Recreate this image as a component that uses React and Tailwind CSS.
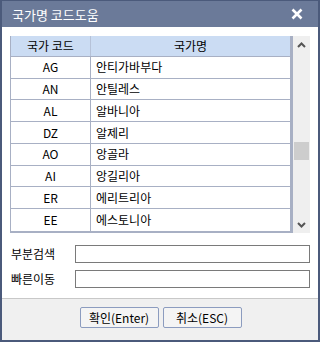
import React from "react";

const rows = [
  ["AG", "안티가바부다"],
  ["AN", "안틸레스"],
  ["AL", "알바니아"],
  ["DZ", "알제리"],
  ["AO", "앙골라"],
  ["AI", "앙길리아"],
  ["ER", "에리트리아"],
  ["EE", "에스토니아"],
];

const font = { fontFamily: '"Noto Sans CJK KR", "Liberation Sans", sans-serif' };

export default function App() {
  return (
    <div
      className="w-[320px] h-[342px] bg-[#4b5a7b] pt-[1px] px-[2px] pb-[2px] flex flex-col text-[12px] text-black"
      style={font}
    >
      {/* title bar */}
      <div className="h-[26px] bg-[#6b7a99] flex items-center justify-between pl-[10px] pr-[15px]">
        <span className="text-white text-[13px] leading-none">국가명 코드도움</span>
        <svg width="12" height="12" viewBox="0 0 12 12">
          <path d="M1.5 1.5L10.5 10.5M10.5 1.5L1.5 10.5" stroke="#fff" strokeWidth="2.6" />
        </svg>
      </div>

      {/* body */}
      <div className="flex-1 bg-white flex flex-col pt-[9px] pl-[8px] pr-[7px]">
        <div className="flex h-[197px]">
          {/* list */}
          <div className="w-[283px] flex flex-col border-l border-[#a8b0c4] border-r-[3px] border-r-[#a8b0c4] border-b-2 border-b-[#a8b0c4]">
            <div className="h-[21px] flex bg-[#cbdcf3] border-b border-[#a8b0c4]">
              <div className="w-[80px] border-r border-[#b6c2d8] flex items-center justify-center">국가 코드</div>
              <div className="flex-1 flex items-center justify-center">국가명</div>
            </div>
            {rows.map(([code, name], i) => (
              <div
                key={code}
                className={`h-[22px] flex ${i < rows.length - 1 ? "border-b border-[#a8b0c4]" : ""}`}
              >
                <div className="w-[80px] border-r border-[#a8b0c4] flex items-center justify-center">{code}</div>
                <div className="flex-1 flex items-center pl-[5px]">{name}</div>
              </div>
            ))}
          </div>
          {/* scrollbar */}
          <div className="w-[17px] bg-[#efefef] flex flex-col items-center">
            <div className="h-[17px] flex items-center justify-center">
              <svg width="9" height="6" viewBox="0 0 9 6">
                <path d="M1 5L4.5 1.5L8 5" stroke="#555" strokeWidth="2" fill="none" />
              </svg>
            </div>
            <div className="flex-1 w-full flex flex-col px-[1px]">
              <div className="h-[89px]" />
              <div className="h-[18px] bg-[#cdcdcd]" />
            </div>
            <div className="h-[17px] flex items-center justify-center">
              <svg width="9" height="6" viewBox="0 0 9 6">
                <path d="M1 1L4.5 4.5L8 1" stroke="#555" strokeWidth="2" fill="none" />
              </svg>
            </div>
          </div>
        </div>

        {/* search fields */}
        <div className="mt-[12px] flex flex-col gap-[7px]">
          <div className="flex items-center">
            <span className="w-[65px] pl-[1px]">부분검색</span>
            <div className="w-[235px] h-[18px] border border-[#7a7a7a] bg-white" />
          </div>
          <div className="flex items-center">
            <span className="w-[65px] pl-[1px]">빠른이동</span>
            <div className="w-[235px] h-[18px] border border-[#7a7a7a] bg-white" />
          </div>
        </div>
      </div>

      {/* footer */}
      <div className="h-[42px] bg-[#f0f0f0] border-t border-[#c8c8c8] flex justify-center gap-[4px] pt-[8px] pl-[1px]">
        <button className="w-[79px] h-[21px] rounded-[2px] border border-[#8c9cbf] bg-[#f4f4f4] flex items-center justify-center leading-none">
          확인(Enter)
        </button>
        <button className="w-[79px] h-[21px] rounded-[2px] border border-[#8c9cbf] bg-[#f4f4f4] flex items-center justify-center leading-none">
          취소(ESC)
        </button>
      </div>
    </div>
  );
}
